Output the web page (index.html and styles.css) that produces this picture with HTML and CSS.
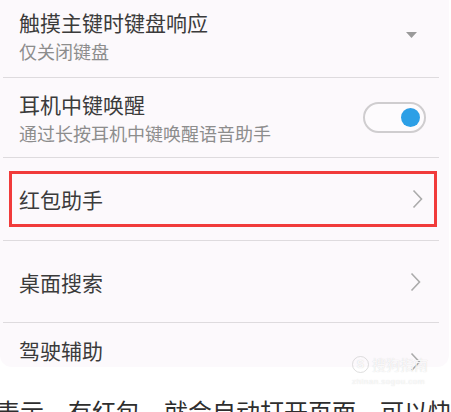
FILE: index.html
```html
<!DOCTYPE html>
<html lang="zh-CN">
<head>
<meta charset="utf-8">
<link rel="stylesheet" href="styles.css">
</head>
<body>
<div class="card">
  <div class="row row-first">
    <div class="texts">
      <div class="title">触摸主键时键盘响应</div>
      <div class="sub">仅关闭键盘</div>
    </div>
    <svg class="caret" width="11" height="6" viewBox="0 0 11 6"><polygon points="0,0 11,0 5.5,6" fill="#9a9a9a"/></svg>
  </div>
  <div class="divider"></div>
  <div class="row row-second">
    <div class="texts">
      <div class="title">耳机中键唤醒</div>
      <div class="sub">通过长按耳机中键唤醒语音助手</div>
    </div>
    <div class="toggle"><span class="knob"></span></div>
  </div>
  <div class="divider"></div>
  <div class="row-wrap">
    <div class="row row-boxed">
      <div class="title">红包助手</div>
      <svg class="chev" width="11" height="20" viewBox="0 0 11 20"><polyline points="1.5,1.5 9.5,10 1.5,18.5" fill="none" stroke="#ababab" stroke-width="1.6"/></svg>
    </div>
  </div>
  <div class="divider"></div>
  <div class="row row-plain">
    <div class="title">桌面搜索</div>
    <svg class="chev" width="11" height="20" viewBox="0 0 11 20"><polyline points="1.5,1.5 9.5,10 1.5,18.5" fill="none" stroke="#ababab" stroke-width="1.6"/></svg>
  </div>
  <div class="divider"></div>
  <div class="row row-last">
    <div class="title">驾驶辅助</div>
    <svg class="chev chev-low" width="11" height="20" viewBox="0 0 11 20"><polyline points="1.5,1.5 9.5,10 1.5,18.5" fill="none" stroke="#ababab" stroke-width="1.6"/></svg>
  </div>
  <div class="watermark">
    <div class="wm-top"><span class="wm-logo">S</span><span class="wm-name">搜狗指南</span></div>
    <div class="wm-url">zhinan.sogou.com</div>
  </div>
</div>
<p class="caption">表示，有红包，就会自动打开页面，可以快</p>
</body>
</html>
```
FILE: styles.css
```css
* { box-sizing: border-box; }
html, body { margin: 0; padding: 0; }
body {
  width: 451px;
  height: 412px;
  overflow: hidden;
  background: #ffffff;
  font-family: "Noto Sans CJK SC", "Noto Sans", sans-serif;
}
.card {
  position: relative;
  width: 449px;
  height: 367px;
  background: #fcf9fc;
  border-radius: 0 0 12px 12px;
}
.row {
  display: flex;
  align-items: center;
  justify-content: space-between;
  padding-left: 19px;
  padding-right: 28px;
}
.title {
  font-size: 21px;
  line-height: 28px;
  color: #3b3b3b;
  white-space: nowrap;
}
.sub {
  font-size: 18px;
  line-height: 24px;
  color: #8d8d8d;
  margin-top: 3px;
  white-space: nowrap;
}
.divider {
  height: 1px;
  margin-left: 3px;
  width: 436px;
  background: #dedbde;
}
.row-first { height: 77px; padding-top: 8px; align-items: flex-start; }
.row-first .caret { margin-top: 24px; margin-right: 4px; }
.row-second { height: 79px; padding-right: 23px; }
.toggle {
  position: relative;
  width: 63px;
  height: 31px;
  border: 2px solid #cfcdcf;
  border-radius: 16px;
  background: #fdfbfd;
}
.knob {
  position: absolute;
  right: 4px;
  top: 4px;
  width: 19px;
  height: 19px;
  border-radius: 50%;
  background: #2c9fe6;
}
.row-wrap { height: 82px; padding: 13px 12px 13px 9px; }
.row-boxed {
  height: 56px;
  border: 3px solid #f13b3b;
  padding-left: 7px;
  padding-right: 11px;
}
.row-plain { height: 81px; }
.row-last { height: 44px; align-items: flex-start; padding-top: 13px; }
.chev-low { margin-top: 16px; }
.watermark {
  position: absolute;
  left: 352px;
  top: 356px;
  color: rgba(255,255,255,0.85);
  text-shadow: 0 0 1px rgba(150,150,150,0.4);
}
.wm-top { display: flex; align-items: center; gap: 3px; }
.wm-logo {
  display: inline-flex;
  align-items: center;
  justify-content: center;
  width: 17px;
  height: 17px;
  border-radius: 50%;
  border: 1.5px solid rgba(200,200,200,0.6);
  font: bold 11px/1 "Liberation Sans", sans-serif;
}
.wm-name { font-size: 14px; line-height: 17px; }
.wm-url {
  font: 8px/10px "Liberation Sans", sans-serif;
  letter-spacing: 0.5px;
  margin-top: 4px;
}
.caption {
  margin: 28px 0 0 -4px;
  font-size: 24px;
  line-height: 32px;
  color: #2e2e2e;
  white-space: nowrap;
}
```
